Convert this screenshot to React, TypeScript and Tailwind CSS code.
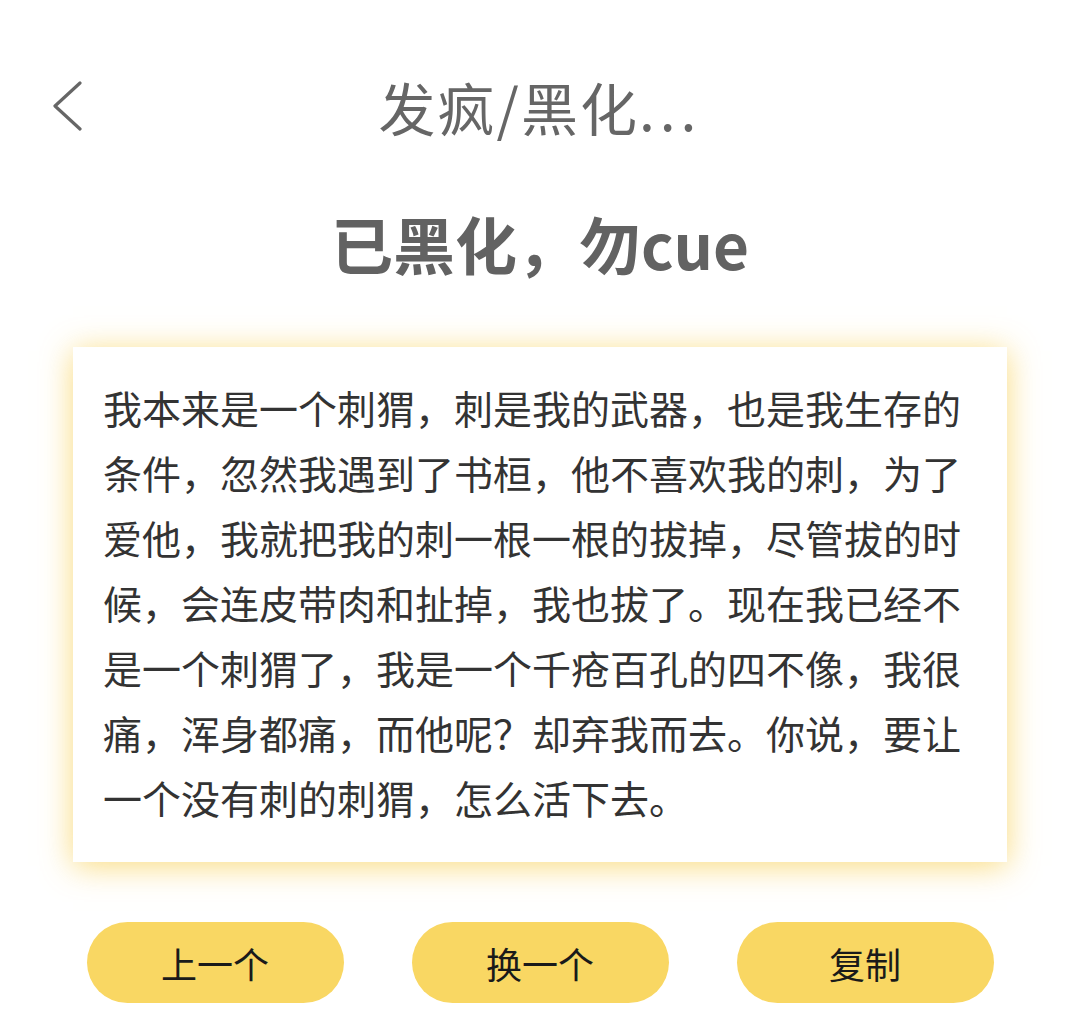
import React from "react";

const body =
  "我本来是一个刺猬，刺是我的武器，也是我生存的条件，忽然我遇到了书桓，他不喜欢我的刺，为了爱他，我就把我的刺一根一根的拔掉，尽管拔的时候，会连皮带肉和扯掉，我也拔了。现在我已经不是一个刺猬了，我是一个千疮百孔的四不像，我很痛，浑身都痛，而他呢？却弃我而去。你说，要让一个没有刺的刺猬，怎么活下去。";

const buttons = ["上一个", "换一个", "复制"];

export default function App() {
  return (
    <div
      className="w-[1080px] h-[1027px] bg-white overflow-hidden"
      style={{ fontFamily: '"Noto Sans CJK SC", "Noto Sans", sans-serif' }}
    >
      {/* header */}
      <div className="grid grid-cols-[1fr_auto_1fr] items-center h-[72px] mt-[70px]">
        <div className="pl-[50px] flex items-center">
          <svg width="34" height="50" viewBox="0 0 34 50" fill="none">
            <path d="M30 2 L5 25 L30 48" stroke="#666" strokeWidth="3.2" strokeLinecap="round" strokeLinejoin="round" />
          </svg>
        </div>
        <h1 className="text-[57px] leading-[72px] tracking-[2px] text-[#666] font-normal">
          发疯/黑化<span className="tracking-[5px]">...</span>
        </h1>
        <div />
      </div>

      <h2 className="mt-[65px] text-center text-[62px] leading-[72px] font-bold text-[#626262]">
        已黑化，勿cue
      </h2>

      {/* card */}
      <div className="mx-[73px] mt-[68px] bg-white px-[30px] pt-[28px] pb-[32px] shadow-[0_4px_30px_rgba(248,204,70,0.7)]">
        <p className="text-[39px] leading-[65px] text-[#333] break-all">{body}</p>
      </div>

      {/* buttons */}
      <div className="w-[907px] mx-auto mt-[60px] flex justify-between">
        {buttons.map((b) => (
          <button
            key={b}
            className="w-[257px] h-[81px] rounded-full bg-[#f9d763] text-[36px] text-[#1a1a1a] flex items-center justify-center"
          >
            {b}
          </button>
        ))}
      </div>
    </div>
  );
}
